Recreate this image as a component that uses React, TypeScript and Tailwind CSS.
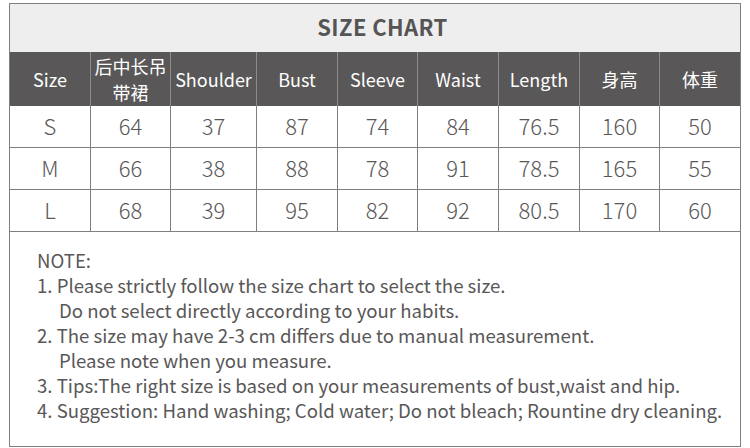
const headers = ["Size", "后中长吊带裙", "Shoulder", "Bust", "Sleeve", "Waist", "Length", "身高", "体重"]

const rows = [
  ["S", "64", "37", "87", "74", "84", "76.5", "160", "50"],
  ["M", "66", "38", "88", "78", "91", "78.5", "165", "55"],
  ["L", "68", "39", "95", "82", "92", "80.5", "170", "60"],
]

const notes = [
  { text: "NOTE:", indent: false },
  { text: "1. Please strictly follow the size chart to select the size.", indent: false },
  { text: "Do not select directly according to your habits.", indent: true },
  { text: "2. The size may have 2-3 cm differs due to manual measurement.", indent: false },
  { text: "Please note when you measure.", indent: true },
  { text: "3. Tips:The right size is based on your measurements of bust,waist and hip.", indent: false },
  { text: "4. Suggestion: Hand washing; Cold water; Do not bleach; Rountine dry cleaning.", indent: false },
]

const cols = "grid grid-cols-[81px_80px_86px_81px_80px_81px_81px_80px_80px]"

export default function App() {
  return (
    <div className="w-[750px] h-[448px] bg-white pt-[3px] pl-[9px] font-['Noto_Sans_CJK_SC','Noto_Sans',sans-serif]">
      <div className="w-[732px] border border-[#7f7f7f]">
        {/* title */}
        <div className="h-[48px] bg-[#eeeeee] flex items-center justify-center pl-[15px] pb-[3px]">
          <span className="text-[22px] font-bold text-[#555555] tracking-[0.4px]">SIZE CHART</span>
        </div>

        {/* header row */}
        <div className={`${cols} h-[54px] bg-[#595757] text-white text-[18px]`}>
          {headers.map((h, i) => (
            <div
              key={h}
              className={`flex items-center justify-center text-center leading-[26px] ${i < headers.length - 1 ? "border-r border-[#8c8a8a]" : ""}`}
            >
              {h}
            </div>
          ))}
        </div>

        {/* data rows */}
        {rows.map((r) => (
          <div key={r[0]} className={`${cols} h-[42px] border-b border-[#7f7f7f] text-[22px] font-light text-[#595757]`}>
            {r.map((v, i) => (
              <div
                key={i}
                className={`flex items-center justify-center pb-[3px] ${i < r.length - 1 ? "border-r border-[#7f7f7f]" : ""}`}
              >
                {v}
              </div>
            ))}
          </div>
        ))}

        {/* notes */}
        <div className="h-[214px] pt-[15px] pl-[27px] text-[18.6px] leading-[25px] text-[#595757]">
          {notes.map((n) => (
            <div key={n.text} className={n.indent ? "pl-[22px]" : ""}>
              {n.text}
            </div>
          ))}
        </div>
      </div>
    </div>
  )
}
